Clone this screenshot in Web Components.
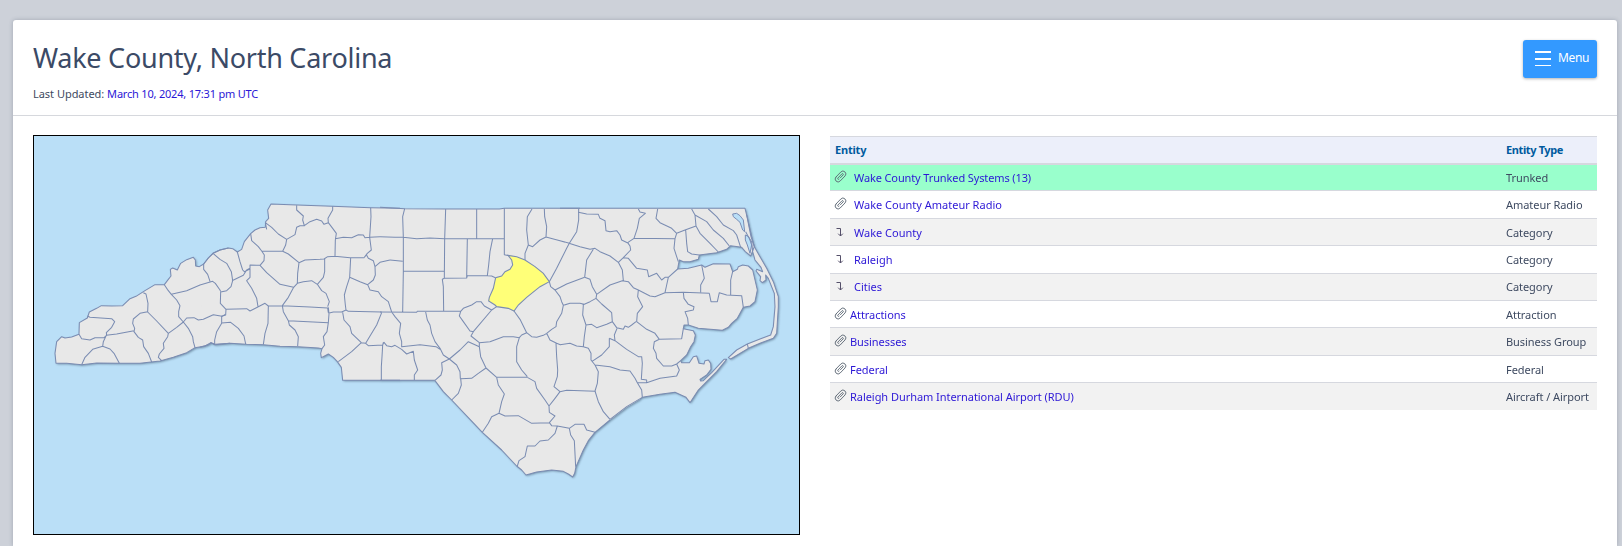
<!DOCTYPE html>
<html lang="en">
<head>
<meta charset="utf-8">
<title>Wake County, North Carolina</title>
<style>
html,body{margin:0;height:100%;overflow:hidden}
body{box-sizing:border-box;padding:20px 5px 0 13px;background:#cdd1d9;font:11px/16px "Noto Sans","Open Sans",sans-serif;color:#3e4a61}
</style>
</head>
<body>
<page-card>
  <page-header slot="head" heading="Wake County, North Carolina" updated="March 10, 2024, 17:31 pm UTC">
    <menu-button>Menu</menu-button>
  </page-header>
  <county-map></county-map>
  <entity-table>
    <entity-row head type="Entity Type">Entity</entity-row>
    <entity-row class="first" icon="clip" type="Trunked">Wake County Trunked Systems (13)</entity-row>
    <entity-row class="tall" icon="clip" type="Amateur Radio">Wake County Amateur Radio</entity-row>
    <entity-row class="odd" icon="arrow" type="Category">Wake County</entity-row>
    <entity-row class="tall" icon="arrow" type="Category">Raleigh</entity-row>
    <entity-row class="odd up" icon="arrow" type="Category">Cities</entity-row>
    <entity-row class="near" icon="clip" type="Attraction">Attractions</entity-row>
    <entity-row class="odd tall near" icon="clip" type="Business Group">Businesses</entity-row>
    <entity-row class="near" icon="clip" type="Federal">Federal</entity-row>
    <entity-row class="odd tall near" icon="clip" type="Aircraft / Airport">Raleigh Durham International Airport (RDU)</entity-row>
  </entity-table>
</page-card>
<script>
class Base extends HTMLElement{
  connectedCallback(){
    if(!this.shadowRoot) this.attachShadow({mode:'open'}).innerHTML=this.render();
  }
}
customElements.define('page-card',class extends Base{
  render(){return `<style>
  :host{display:block;box-sizing:border-box;height:100%;background:#fff;border-radius:3px 3px 0 0;box-shadow:0 0 4px rgba(60,70,90,.3)}
  .body{display:grid;grid-template-columns:767px 767px;gap:30px;align-items:start;padding:19px 20px 0}
  </style><slot name="head"></slot><div class="body"><slot></slot></div>`}
});
customElements.define('page-header',class extends Base{
  render(){return `<style>
  :host{display:flex;box-sizing:border-box;height:96px;justify-content:space-between;align-items:flex-start;padding:20px 20px 0;border-bottom:1px solid #d6d8dd}
  h1{margin:0;font:400 27px/36px "Noto Sans",sans-serif;letter-spacing:-.26px;color:#3b4a66}
  p{margin:10px 0 0;line-height:16px;letter-spacing:-.03px}
  a{color:#2c17d6;letter-spacing:-.2px}
  </style><div><h1>${this.getAttribute('heading')}</h1><p>Last Updated: <a>${this.getAttribute('updated')}</a></p></div><slot></slot>`}
});
customElements.define('menu-button',class extends Base{
  render(){return `<style>
  :host{display:flex;box-sizing:border-box;width:74px;height:38px;padding:0 0 0 12px;gap:7px;align-items:center;background:#39f;color:#fff;border-radius:3px;box-shadow:0 1px 3px rgba(0,0,0,.3);font-size:12px;letter-spacing:-.35px}
  svg{display:block;margin-bottom:1px}
  span{margin-bottom:2px}
  </style><svg width="16" height="15"><path d="M0 1h16M0 8h16" stroke="#fff" stroke-width="2"/><path d="M0 14.5h16" stroke="#fff"/></svg><span><slot></slot></span>`}
});
customElements.define('entity-table',class extends Base{
  render(){return `<style>:host{display:flex;flex-direction:column;margin-top:1px}</style><slot></slot>`}
});
const ICONS={
  clip:'<svg width="12" height="12" viewBox="0 0 12 12" fill="none" stroke="#5b6673" stroke-width=".85" stroke-linecap="round"><g transform="rotate(-46 5.5 6.5)"><rect x="-.9" y="3.6" width="12.8" height="5.8" rx="2.9"/><path d="M2.6 7.3A.8 .8 0 0 1 2.6 5.7H8.4A.8 .8 0 0 1 8.4 7.3H4.6"/></g></svg>',
  arrow:'<svg width="12" height="12" viewBox="0 0 12 12" fill="none" stroke="#55506a" stroke-width="1"><path d="M1.5 3.5H5.5V11"/><path d="M3.2 8.7L5.5 11L7.8 8.7"/></svg>'
};
customElements.define('entity-row',class extends Base{
  render(){
    const icon=this.getAttribute('icon');
    return `<style>
  :host{display:grid;grid-template-columns:1fr 91px;box-sizing:border-box;height:27px;padding:6px 0 0 5px;border-top:1px solid #d6d8df}
  :host(.tall){height:28px}
  :host(.odd){background:#f2f2f2}
  :host(.up){padding-top:5px}
  :host(.first){background:#9fc;border-top-width:2px;padding-top:5px}
  :host([head]){background:#eceffa;color:#005a9e;font-weight:700;letter-spacing:-.38px;padding-top:5px}
  .n{display:flex;gap:7px}
  :host(.first) .n{letter-spacing:-.12px}
  :host([head]) .n{letter-spacing:-.2px}
  :host(.near) .n{gap:3px;letter-spacing:-.05px}
  .t{letter-spacing:-.05px}
  :host([head]) .t{letter-spacing:-.38px}
  a{color:#2c17d6}
  svg{display:block;flex:none;overflow:visible}
  </style><div class="n">${icon?ICONS[icon]+'<a><slot></slot></a>':'<slot></slot>'}</div><div class="t">${this.getAttribute('type')}</div>`}
});

/* Map sheets: x,y is the sheet origin; sheet units are a third of a pixel.
   top + close + reversed bottom bound the land; borders are county lines. */
const SHEETS=[
{x:30,y:190,
 top:'78,520 75,490 80,455 95,440 105,444 125,441 147,433 148,398 172,384 178,366 200,355 214,347 245,348 278,347 300,326 318,319 345,302 375,284 403,284 415,268 423,258 421,238 428,234 442,240 452,220 470,209 490,202 496,210 497,228 508,230 521,222 535,204 549,190 570,180 595,174',
 bottom:'78,520 110,520 155,524 200,519 268,520 330,520 390,513 430,502 470,488 495,473 525,468 543,458 555,463 600,460',
 borders:`M172,378 180,382 245,386 254,395 245,412 229,428 230,436 222,443 195,443 180,450 155,446 147,433
 M229,436 260,432 312,422M229,436 220,455 218,469M155,524 165,502 188,478 218,469 240,477 252,490 268,520
 M340,308 348,312 354,340 353,365 330,370 310,387 308,400 314,415 312,425 325,442 338,450 341,470 355,490 365,516
 M353,366 380,393 415,430
 M403,284 412,298 424,313 440,330 450,347 446,365 446,380 460,396 440,412 415,430 413,440 400,460 402,475 388,492 385,502 395,512
 M424,313 470,302 510,285 548,274 556,280 570,300 572,305
 M586,373 576,379 550,374 520,388 505,390 492,383 470,384 460,396 475,415 488,440 490,455 495,473
 M521,222 521,238 533,253 540,274`},
{x:200,y:190,
 top:'11,222 25,204 39,190 60,180 85,174 98,176 112,186 125,178 133,155 152,131 165,120 180,113 196,112 197,95 206,85 203,60 213,42 270,44 396,49 512,53 600,55',
 bottom:'0,472 25,464 33,458 45,464 90,460 140,463 190,464 240,469 295,470 355,474 366,476 362,490 364,503 385,492 400,502 412,515 424,532 428,571 600,571',
 borders:`M39,190 60,208 80,220 94,245 98,272 93,290 80,302 62,306
 M96,272 130,256 140,240 150,235 150,225 170,226 180,226 192,212 193,195 185,183 175,170 155,152 152,131
 M112,186 120,215 128,240 133,245 148,238M150,236 150,262 140,272 155,295 170,325 174,350
 M62,306 61,340 78,358 77,375 65,379 65,400 50,425 44,450 44,462
 M78,358 140,356 150,363 172,352 195,340 205,348 247,347M65,399 92,397 115,415 132,438 137,462
 M205,348 204,400 195,430 190,464M180,226 200,248 240,283 281,292
 M185,183 248,184 265,192 297,218 293,250 292,280 281,292 265,322 247,347
 M248,184 257,165 260,148 235,132 215,112 196,98M196,98 200,118
 M260,148 285,134 290,112 300,107 313,107 308,90 310,78 290,60 290,46
 M313,107 330,95 350,88 365,93 372,103 385,98 398,115 409,130 406,150 405,199
 M398,49 398,60 384,85 385,98M297,218 315,210 360,208 372,207 383,200 405,199 450,203 493,203
 M406,146 430,142 455,143 475,134 490,135 495,143 508,142M512,53 513,80 509,142 512,165 514,180 502,190 493,202
 M509,142 540,140M374,205 374,245 370,262 352,283
 M292,280 310,275 335,272 352,283 365,302 378,310 388,335 383,350
 M247,347 330,351 383,354 385,368M247,347 250,365 265,392 385,398M265,392 268,405 285,420 295,440 293,468
 M385,352 387,372 385,398 381,425 370,440 374,465 366,476M385,370 400,366 425,366 438,360
 M452,203 449,262 440,290 433,315 436,345 438,360 445,364 545,366
 M449,262 480,275 503,284 510,300 535,305 545,320 565,335 575,366
 M503,284 520,270 526,255 525,230 520,212 505,205 500,196M525,230 540,217 570,210
 M428,367 432,390 450,410 455,430 484,458M545,368 530,405 515,430 497,460 484,458 455,485 415,515
 M497,460 505,467 548,465 551,458M548,465 546,500 544,530 544,570`},
{x:380,y:190,
 top:'0,52 74,56 196,57 290,57 358,57 373,55 600,55',close:'600,600 190,600',
 bottom:'0,571 165,571',
 borders:`M0,140 45,142 70,142 110,146 150,144 194,146 373,146M74,56 68,80 70,142 70,245 68,366
 M30,210 68,214M70,244 193,244M197,57 194,146 193,265 260,264 262,146M290,57 290,146M373,55 373,194 387,197
 M193,265 187,268 190,290 191,363M260,264 262,257 322,257 335,258 346,263M338,146 330,185 326,225 322,257
 M0,366 110,367 112,364 191,363 242,364 250,355 275,345 290,335 303,335 313,348 335,360
 M242,364 238,378 250,395 270,423 280,425M350,350 335,360 280,425 273,438 298,458 330,455 370,440 400,440 418,443
 M402,363 420,388 440,428 425,435 418,443 410,470 410,515 425,540 442,560
 M440,428 455,440 470,442 490,436 500,430 515,418 528,410 530,395 545,370 550,346
 M508,275 512,290 525,300 540,320 545,335 550,346 570,340 600,340M525,300 560,282 614,262
 M508,275 530,235 560,175 568,160M456,57 442,80 440,120 445,165 435,190 435,210
 M445,165 458,170 480,150 498,141 500,110 494,80 493,57M498,141 540,152 568,160 590,125 596,90 596,57
 M500,430 510,450 530,460 541,464M137,366 142,390 150,405 155,430 165,455 180,475 190,495 208,507
 M35,366 45,380 62,400 58,430 65,455 65,470 120,464 168,470 180,478
 M8,460 12,457 20,467 35,470 45,466 55,472 65,478 80,492 100,484 103,510 113,540 103,555 103,570
 M298,458 298,470 265,455 240,480 208,507 185,518 187,540 183,555 165,571
 M208,507 230,525 240,545 241,566M298,470 302,500 318,534 295,550 275,565 242,566
 M318,534 350,562 442,562M528,460 530,500 533,540`},
{x:560,y:190,
 top:'0,55 555,55 560,75 573,140 583,170 572,198 556,185 545,172 512,167 500,178 470,188 418,195 415,208 390,215 370,215 358,210 355,225 353,237 385,235 425,225 435,232 460,221 510,222 518,245 532,238 535,230 548,225 565,228 578,240 585,270 592,300 585,335 570,348 550,352 532,385 515,400 505,412 487,421 415,415 385,405 372,405 370,416 400,422 406,435 402,455 392,470 380,495 362,512 365,518 388,518 400,500 410,498 417,520 432,522 435,512 445,510 452,520 453,538 440,555 420,568 422,573 430,572 455,548 492,508 500,508 470,545 440,575 415,600 390,638 378,622 345,607 300,613 247,622 200,650 150,688',
 close:'0,688',bottom:'0,55',
 borders:`M55,67 80,72 115,73 120,85 135,92 138,122 150,125 170,122 180,135 185,150 205,160
 M27,160 60,170 90,178 105,175 120,185 150,198 175,217 190,203 212,180 210,168 203,158 222,145 345,146
 M235,57 240,66 256,70 238,85 232,115 222,145M293,57 288,85 300,98 335,115 350,130
 M100,178 80,210 74,262M74,262 90,268 97,290 110,313 108,325 90,335 68,345M60,340 72,343
 M70,345 68,375 78,405 73,440 70,470 50,468 30,460 0,464
 M78,405 95,403 110,413 140,403 157,395M108,325 125,342 155,368 157,395 170,413 190,418 195,408 205,412 215,405 228,395
 M110,313 150,285 187,272 205,275 220,293 235,300 270,318 285,320 315,308M175,217 187,240 190,272
 M190,203 205,205 230,235 262,240 266,260 290,250 305,270 315,262 325,262 320,285 315,308 370,307 448,310
 M325,262 353,237M345,146 342,175 350,200 355,215M345,146 350,130 375,120 408,108 405,75 395,57
 M377,120 380,160 383,185 395,192 418,195M408,108 420,130 450,160 475,186M405,75 440,95 460,120 490,145 508,168
 M445,57 470,80 490,105 520,122 530,135 542,172
 M235,300 233,320 248,350 232,370 230,395 260,418 285,430 298,448 365,446 370,416
 M370,307 372,325 385,343 402,350 400,360 375,365 383,385 385,405M425,225 433,265 422,285 422,307
 M518,245 512,270 512,315M448,310 453,335 472,335 478,308 500,315 545,317 550,352
 M298,448 283,455 280,475 288,490 290,505 310,528 335,528 350,522 362,512
 M172,413 163,435 165,452M148,445 165,452 200,478 235,500 245,500 247,520 244,568 260,570 260,578M148,445 148,470 125,495 95,515
 M70,470 85,475 93,490 93,510 105,525 150,530 180,540 210,543 225,565 232,578 245,600 247,622
 M350,522 358,540 350,558 300,565 260,578 232,578M105,525 115,545 112,580 105,603M105,603 115,635 130,665 150,688`},
{x:560,y:190,
 top:'560,75 575,140 583,170 600,200 620,235 640,275 655,320 655,350 650,430 640,445 600,460 565,475 512,507 505,503 530,480 562,462 600,447 632,435 640,410 645,350 643,310 625,265 617,255 618,270 607,278 600,272 602,260 588,243 590,238 608,245 603,232 585,210 578,185 575,155 565,140 557,125',
 close:'',bottom:'',borders:'M562,462 565,475'},
{x:420,y:370,
 top:'45,32 70,65 95,90 150,148 187,187 245,240 290,288 305,300 318,315 350,306 395,300 430,304 445,312 458,321 464,310 468,290 490,240 505,212 525,187 570,150',
 close:'620,112 660,88 660,0 45,0',bottom:'',
 borders:`M122,25 124,45 115,70 95,90
 M230,22 235,45 253,72 245,95 237,130 215,140 205,160 187,187
 M322,22 345,35 350,55 375,90 387,108M237,130 255,138 295,137 335,160 388,158 405,138 388,127 387,108 405,85 420,65 402,50 412,20 413,0
 M420,65 440,61 526,64M388,158 395,167 412,168 448,175 465,163 492,163 500,180 525,187
 M412,168 405,190 385,210 360,213 345,228 322,228 315,260 297,272 292,288M448,175 452,195 463,212 467,290`}
];
const WATER='M518,72 530,70 540,77 550,90 554,125 548,120 540,97 530,88 520,80ZM556,135 566,140 575,165 570,190 562,165 556,150Z';
const WAKE='M384,196 410,200 435,210 465,230 490,250 508,275 480,290 440,322 415,345 402,363 385,355 350,350 345,345 326,333 328,322 340,295 347,263 365,258 375,245 390,238 398,225 395,210Z';
customElements.define('county-map',class extends Base{
  render(){
    const at=(s,d,a='')=>`<path transform="translate(${s.x} ${s.y}) scale(.33333)" d="${d}" ${a}/>`;
    const land=SHEETS.map(s=>at(s,'M'+[s.top,s.close||'',s.bottom.split(' ').reverse().join(' ')].join(' ').trim()+'Z')).join('');
    const coast=SHEETS.map(s=>at(s,'M'+s.top+(s.bottom.includes(' ')?'M'+s.bottom:''))).join('');
    const borders=SHEETS.map(s=>at(s,s.borders)).join('');
    return `<style>
    :host{display:block;box-sizing:border-box;height:400px;border:1px solid #000;background:#badff7}
    svg{display:block}
    .land{fill:#e8e8e8;filter:drop-shadow(1px 1.6px .8px rgba(60,85,110,.6))}
    .line{fill:none;stroke:#7a8cb2;stroke-width:3.1;stroke-linejoin:round}
    .wake{fill:#ffff78;stroke:#7a8cb2;stroke-width:3.3}
    </style><svg width="765" height="398" viewBox="34 136 765 398"><g class="land">${land}</g>
    ${at(SHEETS[3],WATER,'fill="#badff7" stroke="#788cb4" stroke-width="3"')}
    <g class="line">${borders}${coast}</g>
    ${at(SHEETS[2],WAKE,'class="wake"')}</svg>`}
});
</script>
</body>
</html>
